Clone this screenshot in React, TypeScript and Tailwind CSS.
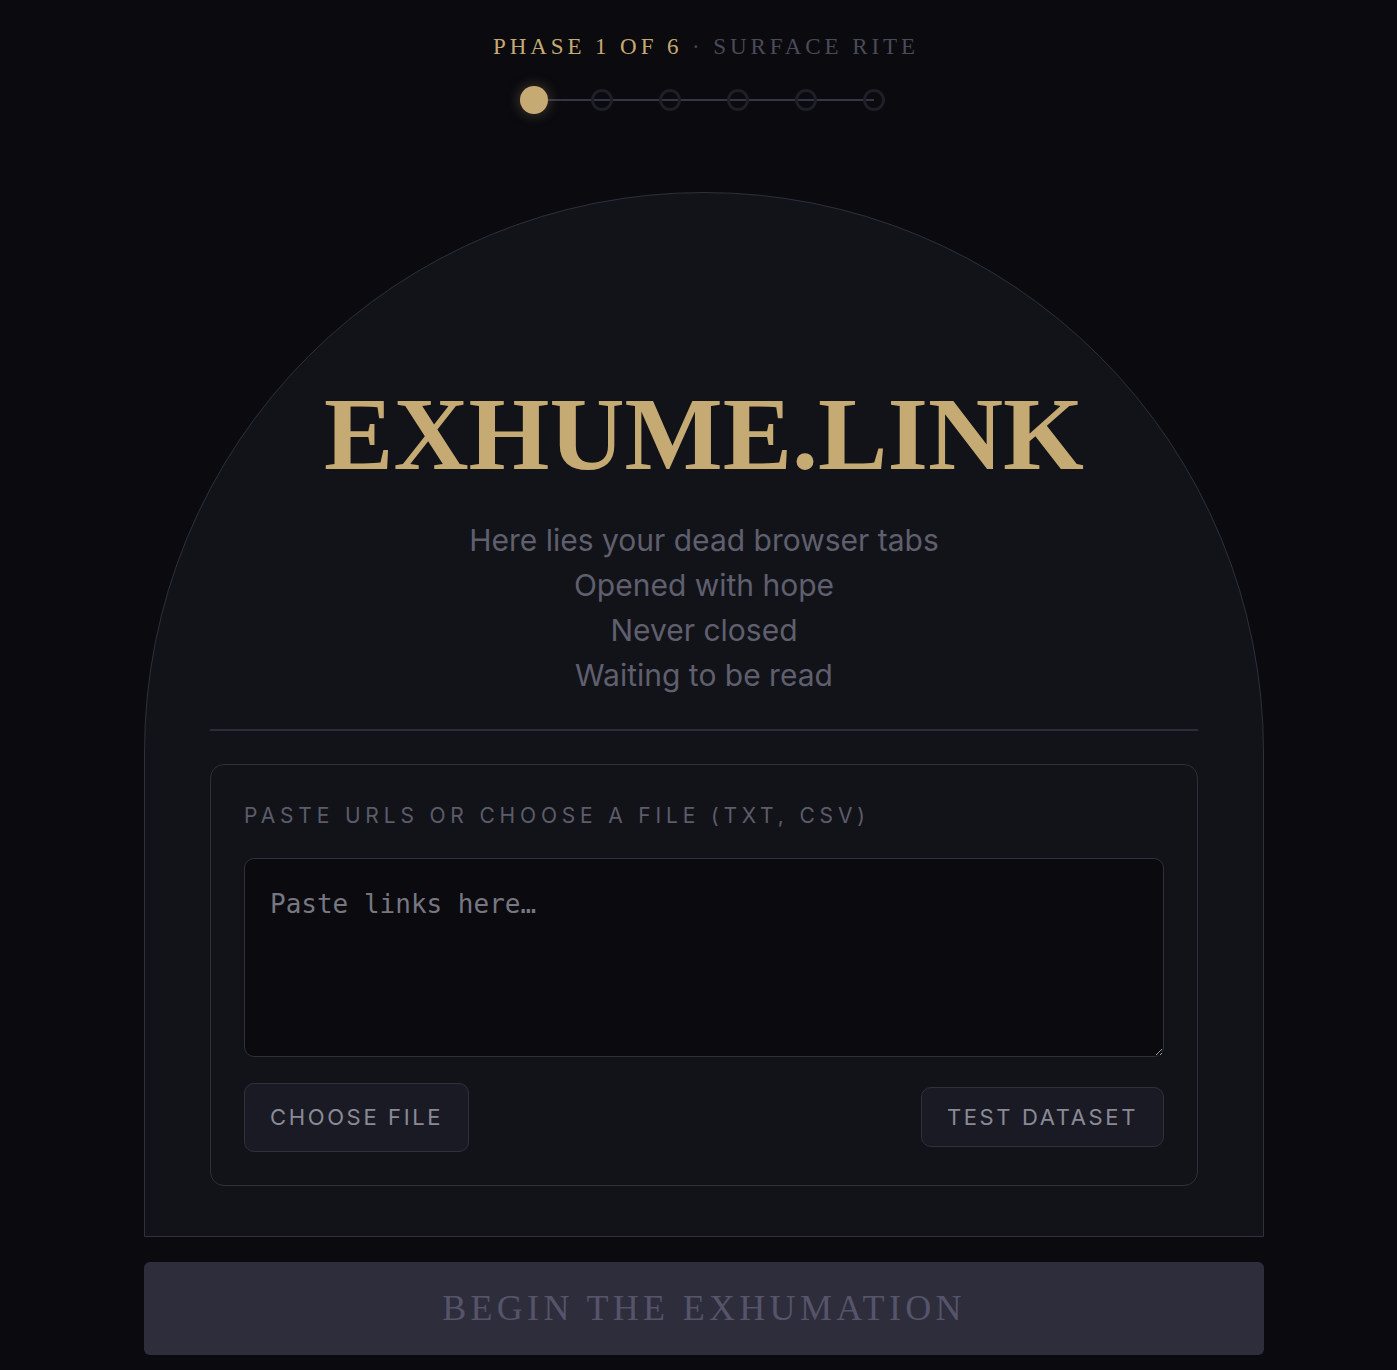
import { useState } from "react"

const serif = "font-['Liberation_Serif',serif]"
const sans = "font-['Inter','Liberation_Sans',sans-serif]"

const PHASES = 6

function Stepper({ current }: { current: number }) {
    return <div className="relative flex items-center gap-[40px]">
        {/* connecting rail, sits under the dots */}
        <div className="absolute left-[14px] right-[14px] top-[13px] h-[2px] bg-[#363645]" />
        {Array.from({ length: PHASES }).map((_, i) =>
            <div key={i} className="relative w-[28px] h-[28px] flex items-center justify-center">
                {i === current
                    ? <div className="w-[28px] h-[28px] rounded-full bg-[#c6aa73] shadow-[0_0_14px_rgba(198,170,115,0.35)]" />
                    : <div className="w-[22px] h-[22px] rounded-full border-[3px] border-[#1f1f29]" />}
            </div>
        )}
    </div>
}

export default function App() {
    const [links, setLinks] = useState("")

    return <div className="min-h-screen bg-[#0a0a0f] flex flex-col items-center pt-[33px] pl-[11px]">
        <div className={`${serif} text-[23px] leading-[28px] tracking-[0.17em] pl-[0.17em]`}>
            <span className="text-[#c6aa73]">PHASE 1 OF 6</span>
            <span className="text-[#4a4a58]"> · SURFACE RITE</span>
        </div>

        <div className="mt-[25px]">
            <Stepper current={0} />
        </div>

        {/* the arched slab */}
        <div className="mt-[78px] w-[1120px] rounded-t-[560px] border-[1.5px] border-[#2f2f3d] bg-[#121319] flex flex-col items-center pt-[189px] pb-[50px] px-[65px]">
            <h1 className={`${serif} font-bold text-[104px] leading-none text-[#c6aa73]`}>
                EXHUME.LINK
            </h1>

            <div className={`${sans} mt-[32px] text-[30px] leading-[45px] text-[#5f5f6e] text-center`}>
                <p>Here lies your dead browser tabs</p>
                <p>Opened with hope</p>
                <p>Never closed</p>
                <p>Waiting to be read</p>
            </div>

            <div className="mt-[31px] w-full h-[1.5px] bg-[#2c2c39]" />

            <div className="mt-[33px] w-full rounded-[14px] border-[1.5px] border-[#2f2f3d] px-[33px] pt-[37px] pb-[33px]">
                <label className={`${sans} block text-[21px] leading-[28px] tracking-[0.23em] text-[#5c5c6a]`}>
                    PASTE URLS OR CHOOSE A FILE (TXT, CSV)
                </label>
                <textarea
                    value={links}
                    onChange={(e) => setLinks(e.target.value)}
                    placeholder="Paste links here…"
                    className="mt-[28px] block w-full h-[199px] rounded-[10px] border-[1.5px] border-[#2f2f3d] bg-[#0a0a0f] px-[25px] pt-[26px] pb-[18px] font-['DejaVu_Sans_Mono',monospace] text-[26px] leading-[39px] text-[#8a8a95] placeholder:text-[#777782] outline-none"
                />
                <div className="mt-[26px] flex items-center justify-between">
                    <button className={`${sans} h-[69px] px-[25px] rounded-[10px] border-[1.5px] border-[#30303e] bg-[#1a1a24] text-[22px] tracking-[0.12em] text-[#8a8a96]`}>
                        CHOOSE FILE
                    </button>
                    <button className={`${sans} h-[60px] px-[25px] rounded-[10px] border-[1.5px] border-[#30303e] bg-[#1a1a24] text-[22px] tracking-[0.12em] text-[#8a8a96]`}>
                        TEST DATASET
                    </button>
                </div>
            </div>
        </div>

        <button disabled className={`${serif} mt-[25px] w-[1120px] h-[93px] rounded-[6px] bg-[#2e2d3b] text-[36px] tracking-[0.12em] text-[#55546a]`}>
            BEGIN THE EXHUMATION
        </button>
        <div className="h-[17px]" />
    </div>
}
